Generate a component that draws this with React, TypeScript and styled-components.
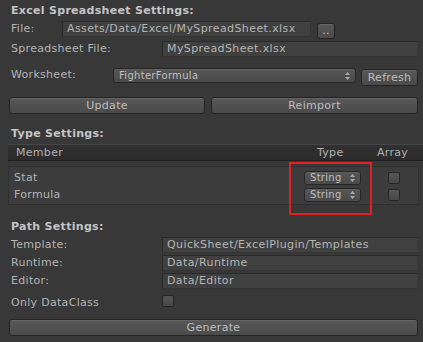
import React from "react";
import styled, { createGlobalStyle } from "styled-components";

const Global = createGlobalStyle`
  html, body { margin: 0; padding: 0; background: #383838; }
  body { font-family: "DejaVu Sans", Verdana, sans-serif; font-size: 11px; color: #b4b4b4; letter-spacing: 0.3px; }
  * { box-sizing: border-box; }
`;

const Panel = styled.div`
  width: 423px;
  height: 342px;
  background: #383838;
  padding: 0 4px 0 8px;
  overflow: hidden;
`;

const SectionTitle = styled.div<{ $top: number }>`
  margin-top: ${(p) => p.$top}px;
  padding-left: 3px;
  height: 14px;
  line-height: 14px;
  font-weight: bold;
  letter-spacing: 0.3px;
  color: #c4c4c4;
  font-size: 11px;
`;

const Row = styled.div<{ $top: number; $h?: number }>`
  display: flex;
  align-items: flex-start;
  margin-top: ${(p) => p.$top}px;
  height: ${(p) => p.$h ?? 16}px;
`;

const Label = styled.div<{ $w: number }>`
  width: ${(p) => p.$w}px;
  flex: none;
  padding-left: 3px;
  line-height: 16px;
  color: #b4b4b4;
  white-space: nowrap;
`;

const TextField = styled.div<{ $w?: number }>`
  ${(p) => (p.$w ? `width: ${p.$w}px; flex: none;` : "flex: 1;")}
  height: 16px;
  line-height: 14px;
  padding: 0 4px;
  background: #404040;
  border: 1px solid #2a2a2a;
  border-bottom-color: #343434;
  border-right-color: #343434;
  color: #b4b4b4;
  letter-spacing: 0.4px;
  white-space: nowrap;
  overflow: hidden;
`;

const Btn = styled.div<{ $w?: number; $h?: number; $mt?: number; $ml?: number; $mr?: number }>`
  ${(p) => (p.$w ? `width: ${p.$w}px; flex: none;` : "flex: 1;")}
  height: ${(p) => p.$h ?? 17}px;
  margin-top: ${(p) => p.$mt ?? 0}px;
  margin-left: ${(p) => p.$ml ?? 0}px;
  margin-right: ${(p) => p.$mr ?? 0}px;
  background: linear-gradient(#585858, #4a4a4a);
  border: 1px solid #242424;
  border-radius: 3px;
  box-shadow: inset 0 1px 0 rgba(255,255,255,0.08);
  color: #bdbdbd;
  text-align: center;
  line-height: ${(p) => (p.$h ?? 17) - 2}px;
  white-space: nowrap;
`;

const Popup = styled.div<{ $w?: number; $h?: number; $mt?: number }>`
  ${(p) => (p.$w ? `width: ${p.$w}px; flex: none;` : "flex: 1;")}
  position: relative;
  height: ${(p) => p.$h ?? 15}px;
  margin-top: ${(p) => p.$mt ?? 0}px;
  background: linear-gradient(#565656, #4a4a4a);
  border: 1px solid #262626;
  border-radius: 3px;
  box-shadow: inset 0 1px 0 rgba(255,255,255,0.06);
  color: #bdbdbd;
  font-size: 10px;
  line-height: ${(p) => (p.$h ?? 15) - 2}px;
  padding-left: 5px;
  white-space: nowrap;
`;

const Arrows = styled.svg`
  position: absolute;
  right: 5px;
  top: 50%;
  margin-top: -4px;
`;

const PopupArrows = () => (
  <Arrows width="5" height="8" viewBox="0 0 5 8">
    <path d="M2.5 0 L5 3 L0 3 Z M2.5 8 L5 5 L0 5 Z" fill="#a8a8a8" />
  </Arrows>
);

const TableWrap = styled.div`
  position: relative;
  margin-top: 3px;
`;

const TableHeader = styled.div`
  display: flex;
  height: 17px;
  margin-right: -4px;
  background: linear-gradient(#313131, #2b2b2b);
  border-top: 1px solid #464646;
  border-bottom: 1px solid #1f1f1f;
  line-height: 15px;
  color: #b0b0b0;
`;

const HeadCell = styled.div<{ $w?: number; $pl?: number }>`
  ${(p) => (p.$w ? `width: ${p.$w}px; flex: none;` : "flex: 1;")}
  padding-left: ${(p) => p.$pl ?? 0}px;
`;

const TableBody = styled.div`
  margin-top: 5px;
  height: 39px;
  background: #3c3c3c;
  border: 1px solid #2f2f2f;
  padding-top: 2px;
`;

const TableRow = styled.div`
  display: flex;
  align-items: center;
  height: 17px;
`;

const Cell = styled.div<{ $w?: number; $pl?: number }>`
  ${(p) => (p.$w ? `width: ${p.$w}px; flex: none;` : "flex: 1;")}
  padding-left: ${(p) => p.$pl ?? 0}px;
  display: flex;
  align-items: center;
`;

const Check = styled.div`
  width: 12px;
  height: 12px;
  background: linear-gradient(#555555, #484848);
  border: 1px solid #262626;
  border-radius: 2px;
`;

const Highlight = styled.div`
  position: absolute;
  left: 281px;
  top: 18px;
  width: 83px;
  height: 53px;
  border: 2px solid #e31e24;
`;

export default function App() {
  return (
    <>
      <Global />
      <Panel>
        <SectionTitle $top={4}>Excel Spreadsheet Settings:</SectionTitle>
        <Row $top={3} $h={18}>
          <Label $w={54}>File:</Label>
          <TextField $w={249}>Assets/Data/Excel/MySpreadSheet.xlsx</TextField>
          <Btn $w={18} $h={16} $mt={2} $ml={6}>..</Btn>
        </Row>
        <Row $top={2}>
          <Label $w={154}>Spreadsheet File:</Label>
          <TextField>MySpreadSheet.xlsx</TextField>
        </Row>
        <Row $top={10} $h={19}>
          <Label $w={105}>Worksheet:</Label>
          <Popup $w={243} $mt={1}>FighterFormula<PopupArrows /></Popup>
          <Btn $w={57} $h={17} $mt={2} $ml={5} $mr={1}>Refresh</Btn>
        </Row>
        <Row $top={11} $h={17}>
          <Btn $w={196} $ml={1}>Update</Btn>
          <Btn $ml={6} $mr={1}>Reimport</Btn>
        </Row>
        <SectionTitle $top={13}>Type Settings:</SectionTitle>
        <TableWrap>
          <TableHeader>
            <HeadCell $pl={8}>Member</HeadCell>
            <HeadCell $w={60}>Type</HeadCell>
            <HeadCell $w={46}>Array</HeadCell>
          </TableHeader>
          <TableBody>
            <TableRow>
              <Cell $pl={5}>Stat</Cell>
              <Cell $w={84}><Popup $w={57} $h={14}>String<PopupArrows /></Popup></Cell>
              <Cell $w={30}><Check /></Cell>
            </TableRow>
            <TableRow>
              <Cell $pl={5}>Formula</Cell>
              <Cell $w={84}><Popup $w={57} $h={14}>String<PopupArrows /></Popup></Cell>
              <Cell $w={30}><Check /></Cell>
            </TableRow>
          </TableBody>
          <Highlight />
        </TableWrap>
        <SectionTitle $top={15}>Path Settings:</SectionTitle>
        <Row $top={3}>
          <Label $w={154}>Template:</Label>
          <TextField>QuickSheet/ExcelPlugin/Templates</TextField>
        </Row>
        <Row $top={2}>
          <Label $w={154}>Runtime:</Label>
          <TextField>Data/Runtime</TextField>
        </Row>
        <Row $top={2}>
          <Label $w={154}>Editor:</Label>
          <TextField>Data/Editor</TextField>
        </Row>
        <Row $top={6} $h={12}>
          <Label $w={154}>Only DataClass</Label>
          <Check />
        </Row>
        <Row $top={12} $h={17}>
          <Btn $ml={1} $mr={1}>Generate</Btn>
        </Row>
      </Panel>
    </>
  );
}
